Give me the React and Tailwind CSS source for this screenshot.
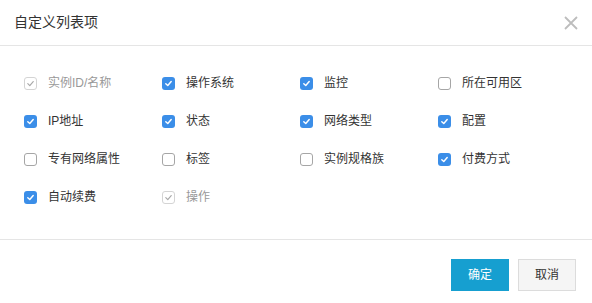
import React from 'react'

const ITEMS = [
    { label: '实例ID/名称', state: 'disabled' },
    { label: '操作系统', state: 'on' },
    { label: '监控', state: 'on' },
    { label: '所在可用区', state: 'off' },
    { label: 'IP地址', state: 'on' },
    { label: '状态', state: 'on' },
    { label: '网络类型', state: 'on' },
    { label: '配置', state: 'on' },
    { label: '专有网络属性', state: 'off' },
    { label: '标签', state: 'off' },
    { label: '实例规格族', state: 'off' },
    { label: '付费方式', state: 'on' },
    { label: '自动续费', state: 'on' },
    { label: '操作', state: 'disabled' },
]

function Check({ state }) {
    if (state === 'on') {
        return (
            <span className="w-[13px] h-[13px] rounded-[3px] bg-[#3b8ee8] flex items-center justify-center shrink-0">
                <svg width="9" height="9" viewBox="0 0 10 10" fill="none">
                    <path d="M2 5.2 L4.2 7.3 L8 2.8" stroke="#fff" strokeWidth="1.6" strokeLinecap="round" strokeLinejoin="round" />
                </svg>
            </span>
        )
    }
    if (state === 'disabled') {
        return (
            <span className="w-[13px] h-[13px] rounded-[3px] border border-[#d4d4d4] bg-white flex items-center justify-center shrink-0">
                <svg width="9" height="9" viewBox="0 0 10 10" fill="none">
                    <path d="M2 5.2 L4.2 7.3 L8 2.8" stroke="#a8a8a8" strokeWidth="1.3" strokeLinecap="round" strokeLinejoin="round" />
                </svg>
            </span>
        )
    }
    return <span className="w-[13px] h-[13px] rounded-[3px] border border-[#a6a6a6] bg-white shrink-0" />
}

export default function App() {
    return (
        <div className="w-[592px] h-[303px] bg-white flex flex-col text-[#333]" style={{ fontFamily: '"Liberation Sans", "Noto Sans CJK SC", sans-serif' }}>
            <div className="h-[46px] border-b border-[#e5e5e5] flex items-center justify-between pl-[14px] pr-[14px] shrink-0">
                <span className="text-[14px] text-[#333]">自定义列表项</span>
                <svg width="14" height="14" viewBox="0 0 14 14">
                    <path d="M1 1 L13 13 M13 1 L1 13" stroke="#bdbdbd" strokeWidth="1.8" />
                </svg>
            </div>

            <div className="grid grid-cols-4 w-[552px] pl-6 pt-[18px] pb-[23px] box-content">
                {ITEMS.map((it) => (
                    <div key={it.label} className="h-[38px] flex items-center gap-[11px]">
                        <Check state={it.state} />
                        <span className={`text-[12px] ${it.state === 'disabled' ? 'text-[#999]' : 'text-[#333]'}`}>{it.label}</span>
                    </div>
                ))}
            </div>

            <div className="border-t border-[#e5e5e5] flex justify-end gap-[9px] pt-[19px] pr-4">
                <button className="w-[58px] h-[32px] bg-[#169fd0] text-white text-[12px]">确定</button>
                <button className="w-[58px] h-[32px] bg-[#f5f5f5] border border-[#dcdcdc] text-[#333] text-[12px]">取消</button>
            </div>
        </div>
    )
}
